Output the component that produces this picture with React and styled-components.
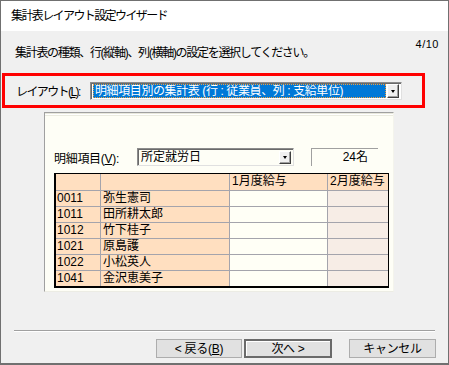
import React from 'react';
import styled, { createGlobalStyle } from 'styled-components';

const GlobalStyle = createGlobalStyle`
  html, body { margin: 0; padding: 0; background: #fff; }
  * { box-sizing: border-box; }
`;

const FONT = `"Liberation Sans", "Noto Sans CJK JP", sans-serif`;

const employees = [
  { code: '0011', name: '弥生憲司' },
  { code: '1011', name: '田所耕太郎' },
  { code: '1012', name: '竹下桂子' },
  { code: '1021', name: '原島護' },
  { code: '1022', name: '小松英人' },
  { code: '1041', name: '金沢恵美子' },
];

const Window = styled.div`
  width: 449px;
  height: 365px;
  border: 1px solid #707070;
  border-bottom-width: 2px;
  display: flex;
  flex-direction: column;
  font-family: ${FONT};
  font-size: 12px;
  color: #000;
  overflow: hidden;
`;

const TitleBar = styled.div`
  height: 30px;
  flex: none;
  background: #fff;
  padding-left: 10px;
  line-height: 30px;
  letter-spacing: -1.6px;
`;

const Body = styled.div`
  flex: 1;
  background: #f0f0f0;
  display: flex;
  flex-direction: column;
`;

const Header = styled.div`
  height: 42px;
  display: flex;
  justify-content: space-between;
  align-items: flex-start;
  padding: 12px 9px 0 14px;
`;

const Instruction = styled.div`
  letter-spacing: -1.3px;
`;

const Step = styled.div`
  font-size: 11px;
  margin-top: -5px;
  letter-spacing: 0.5px;
`;

const Highlight = styled.div`
  margin: 0 23px 0 1px;
  height: 35px;
  border: 3px solid #ff0000;
  display: flex;
  align-items: center;
  padding-left: 11px;
`;

const Label = styled.span`
  letter-spacing: ${p => p.$tight ? '-1.6px' : '-0.3px'};
  width: ${p => p.$w}px;
  flex: none;
  u { text-decoration: underline; }
`;

const Combo = styled.div`
  width: ${p => p.$w}px;
  height: ${p => p.$h}px;
  border: 1px solid #8c8c8c;
  border-right-color: #e0e0e0;
  border-bottom-color: #e0e0e0;
  box-shadow: inset 1px 1px 0 #6a6a6a;
  background: ${p => p.$bg || '#fff'};
  display: flex;
  align-items: center;
  padding: 1px 2px 1px 2px;
  gap: 1px;
`;

const Selected = styled.div`
  flex: 1;
  height: 14px;
  background: #0078d7;
  color: #fff;
  border: 1px dotted #f0a040;
  padding-left: 1px;
  line-height: 12px;
  letter-spacing: -0.4px;
  white-space: nowrap;
  overflow: hidden;
`;

const ComboText = styled.div`
  flex: 1;
  padding-left: 1px;
  line-height: 14px;
`;

const DropButton = styled.div`
  width: ${p => p.$w}px;
  height: ${p => p.$h}px;
  flex: none;
  background: #f0f0f0;
  border: 1px solid;
  border-color: #fff #404040 #404040 #fff;
  box-shadow: inset -1px -1px 0 #a0a0a0;
  display: flex;
  align-items: center;
  justify-content: center;
  &::after {
    content: '';
    border-left: 2.5px solid transparent;
    border-right: 2.5px solid transparent;
    border-top: 3px solid #000;
    margin-top: 1px;
  }
`;

const Preview = styled.div`
  margin: 4px 0 0 43px;
  width: 350px;
  height: 180px;
  background: #fefef6;
  border: 1px solid;
  border-color: #a0a0a0 #f4f4ec #ecece4 #a0a0a0;
  box-shadow: inset 0 1px 0 #e8e8dc, inset 0 2px 0 #fff, inset 0 3px 0 #ecece0;
  padding: 35px 0 0 9px;
`;

const FilterRow = styled.div`
  display: flex;
  align-items: center;
  height: 18px;
`;

const CountBox = styled.div`
  margin-left: 17px;
  width: 67px;
  height: 18px;
  border-top: 1px solid #a0a0a0;
  border-left: 1px solid #a0a0a0;
  text-align: right;
  padding-right: 10px;
  line-height: 17px;
`;

const Grid = styled.div`
  margin-top: 7px;
  width: max-content;
  display: grid;
  grid-template-columns: 44px 128px 97px 60px;
  grid-template-rows: 16px;
  grid-auto-rows: 15px;
  gap: 1px;
  background: #a4a4ac;
  border: 1px solid #000;
  border-left-width: 2px;
  border-bottom-width: 2px;
`;

const Cell = styled.div`
  background: ${p => p.$bg};
  line-height: 15px;
  padding-left: ${p => p.$pad ?? 2}px;
  font-size: 12px;
  white-space: nowrap;
  overflow: hidden;
`;

const Spacer = styled.div`
  flex: 1;
`;

const Separator = styled.div`
  margin: 0 13px 0 13px;
  height: 2px;
  border-top: 1px solid #a0a0a0;
  border-bottom: 1px solid #fff;
`;

const Footer = styled.div`
  display: flex;
  padding: 7px 12px 5px 0;
  justify-content: flex-end;
`;

const Button = styled.button`
  width: ${p => p.$w}px;
  height: 19px;
  margin-left: ${p => p.$ml}px;
  background: #e1e1e1;
  border: 1px solid #adadad;
  font-family: ${FONT};
  font-size: 12px;
  padding: 0;
  line-height: 16px;
  color: #000;
  letter-spacing: -0.3px;
  ${p => p.$default && `
    border: 2px solid #6a6a6a;
    box-shadow: inset 1px 1px 0 #fff;
  `}
  u { text-decoration: underline; }
`;

const PEACH = '#ffdfc0';
const IVORY = '#fffff6';
const PINK = '#f7ede6';

export default function App() {
  return (
    <>
      <GlobalStyle />
      <Window>
        <TitleBar>集計表レイアウト設定ウイザード</TitleBar>
        <Body>
          <Header>
            <Instruction>集計表の種類、行(縦軸)、列(横軸)の設定を選択してください。</Instruction>
            <Step>4/10</Step>
          </Header>
          <Highlight>
            <Label $w={74} $tight>レイアウト(<u>L</u>):</Label>
            <Combo $w={312} $h={18}>
              <Selected>明細項目別の集計表 (行 : 従業員、列 : 支給単位)</Selected>
              <DropButton $w={12} $h={14} />
            </Combo>
          </Highlight>
          <Preview>
            <FilterRow>
              <Label $w={83}>明細項目(<u>V</u>):</Label>
              <Combo $w={157} $h={18} $bg="#fefef6">
                <ComboText>所定就労日</ComboText>
                <DropButton $w={12} $h={13} />
              </Combo>
              <CountBox>24名</CountBox>
            </FilterRow>
            <Grid>
              <Cell $bg={PEACH} />
              <Cell $bg={PEACH} />
              <Cell $bg={PEACH}>1月度給与</Cell>
              <Cell $bg={PEACH}>2月度給与</Cell>
              {employees.map(e => (
                <React.Fragment key={e.code}>
                  <Cell $bg={PEACH} $pad={1}>{e.code}</Cell>
                  <Cell $bg={PEACH}>{e.name}</Cell>
                  <Cell $bg={IVORY} />
                  <Cell $bg={PINK} />
                </React.Fragment>
              ))}
            </Grid>
          </Preview>
          <Spacer />
          <Separator />
          <Footer>
            <Button $w={86} $ml={0}>&lt; 戻る(<u>B</u>)</Button>
            <Button $w={88} $ml={2} $default>次へ &gt;</Button>
            <Button $w={87} $ml={17}>キャンセル</Button>
          </Footer>
        </Body>
      </Window>
    </>
  );
}
